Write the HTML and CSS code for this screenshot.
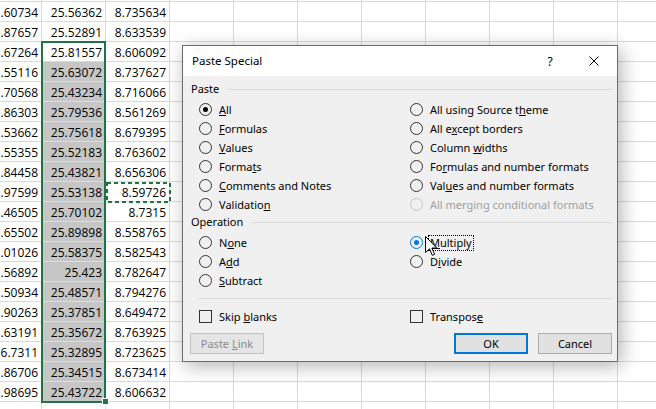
FILE: index.html
```html
<!DOCTYPE html>
<html>
<head>
<meta charset="utf-8">
<link rel="stylesheet" href="styles.css">
</head>
<body>
<div class="sheet">
  <div class="row"><div class="cell"></div><div class="cell"></div><div class="cell"></div><div class="cell"></div><div class="cell"></div><div class="cell"></div><div class="cell"></div><div class="cell"></div><div class="cell"></div><div class="cell"></div><div class="cell"></div></div>
  <div class="row"><div class="cell">.60734</div><div class="cell">25.56362</div><div class="cell">8.735634</div><div class="cell"></div><div class="cell"></div><div class="cell"></div><div class="cell"></div><div class="cell"></div><div class="cell"></div><div class="cell"></div><div class="cell"></div></div>
  <div class="row"><div class="cell">.87657</div><div class="cell">25.52891</div><div class="cell">8.633539</div><div class="cell"></div><div class="cell"></div><div class="cell"></div><div class="cell"></div><div class="cell"></div><div class="cell"></div><div class="cell"></div><div class="cell"></div></div>
  <div class="row"><div class="cell">.67264</div><div class="cell">25.81557</div><div class="cell">8.606092</div><div class="cell"></div><div class="cell"></div><div class="cell"></div><div class="cell"></div><div class="cell"></div><div class="cell"></div><div class="cell"></div><div class="cell"></div></div>
  <div class="row"><div class="cell">.55116</div><div class="cell sel">25.63072</div><div class="cell">8.737627</div><div class="cell"></div><div class="cell"></div><div class="cell"></div><div class="cell"></div><div class="cell"></div><div class="cell"></div><div class="cell"></div><div class="cell"></div></div>
  <div class="row"><div class="cell">.70568</div><div class="cell sel">25.43234</div><div class="cell">8.716066</div><div class="cell"></div><div class="cell"></div><div class="cell"></div><div class="cell"></div><div class="cell"></div><div class="cell"></div><div class="cell"></div><div class="cell"></div></div>
  <div class="row"><div class="cell">.86303</div><div class="cell sel">25.79536</div><div class="cell">8.561269</div><div class="cell"></div><div class="cell"></div><div class="cell"></div><div class="cell"></div><div class="cell"></div><div class="cell"></div><div class="cell"></div><div class="cell"></div></div>
  <div class="row"><div class="cell">.53662</div><div class="cell sel">25.75618</div><div class="cell">8.679395</div><div class="cell"></div><div class="cell"></div><div class="cell"></div><div class="cell"></div><div class="cell"></div><div class="cell"></div><div class="cell"></div><div class="cell"></div></div>
  <div class="row"><div class="cell">.55355</div><div class="cell sel">25.52183</div><div class="cell">8.763602</div><div class="cell"></div><div class="cell"></div><div class="cell"></div><div class="cell"></div><div class="cell"></div><div class="cell"></div><div class="cell"></div><div class="cell"></div></div>
  <div class="row"><div class="cell">.84458</div><div class="cell sel">25.43821</div><div class="cell">8.656306</div><div class="cell"></div><div class="cell"></div><div class="cell"></div><div class="cell"></div><div class="cell"></div><div class="cell"></div><div class="cell"></div><div class="cell"></div></div>
  <div class="row"><div class="cell">.97599</div><div class="cell sel">25.53138</div><div class="cell">8.59726</div><div class="cell"></div><div class="cell"></div><div class="cell"></div><div class="cell"></div><div class="cell"></div><div class="cell"></div><div class="cell"></div><div class="cell"></div></div>
  <div class="row"><div class="cell">.46505</div><div class="cell sel">25.70102</div><div class="cell">8.7315</div><div class="cell"></div><div class="cell"></div><div class="cell"></div><div class="cell"></div><div class="cell"></div><div class="cell"></div><div class="cell"></div><div class="cell"></div></div>
  <div class="row"><div class="cell">.65502</div><div class="cell sel">25.89898</div><div class="cell">8.558765</div><div class="cell"></div><div class="cell"></div><div class="cell"></div><div class="cell"></div><div class="cell"></div><div class="cell"></div><div class="cell"></div><div class="cell"></div></div>
  <div class="row"><div class="cell">.01026</div><div class="cell sel">25.58375</div><div class="cell">8.582543</div><div class="cell"></div><div class="cell"></div><div class="cell"></div><div class="cell"></div><div class="cell"></div><div class="cell"></div><div class="cell"></div><div class="cell"></div></div>
  <div class="row"><div class="cell">.56892</div><div class="cell sel">25.423</div><div class="cell">8.782647</div><div class="cell"></div><div class="cell"></div><div class="cell"></div><div class="cell"></div><div class="cell"></div><div class="cell"></div><div class="cell"></div><div class="cell"></div></div>
  <div class="row"><div class="cell">.50934</div><div class="cell sel">25.48571</div><div class="cell">8.794276</div><div class="cell"></div><div class="cell"></div><div class="cell"></div><div class="cell"></div><div class="cell"></div><div class="cell"></div><div class="cell"></div><div class="cell"></div></div>
  <div class="row"><div class="cell">.90263</div><div class="cell sel">25.37851</div><div class="cell">8.649472</div><div class="cell"></div><div class="cell"></div><div class="cell"></div><div class="cell"></div><div class="cell"></div><div class="cell"></div><div class="cell"></div><div class="cell"></div></div>
  <div class="row"><div class="cell">.63191</div><div class="cell sel">25.35672</div><div class="cell">8.763925</div><div class="cell"></div><div class="cell"></div><div class="cell"></div><div class="cell"></div><div class="cell"></div><div class="cell"></div><div class="cell"></div><div class="cell"></div></div>
  <div class="row"><div class="cell">6.7311</div><div class="cell sel">25.32895</div><div class="cell">8.723625</div><div class="cell"></div><div class="cell"></div><div class="cell"></div><div class="cell"></div><div class="cell"></div><div class="cell"></div><div class="cell"></div><div class="cell"></div></div>
  <div class="row"><div class="cell">.86706</div><div class="cell sel">25.34515</div><div class="cell">8.673414</div><div class="cell"></div><div class="cell"></div><div class="cell"></div><div class="cell"></div><div class="cell"></div><div class="cell"></div><div class="cell"></div><div class="cell"></div></div>
  <div class="row"><div class="cell">.98695</div><div class="cell sel">25.43722</div><div class="cell">8.606632</div><div class="cell"></div><div class="cell"></div><div class="cell"></div><div class="cell"></div><div class="cell"></div><div class="cell"></div><div class="cell"></div><div class="cell"></div></div>
  <div class="row"><div class="cell"></div><div class="cell"></div><div class="cell"></div><div class="cell"></div><div class="cell"></div><div class="cell"></div><div class="cell"></div><div class="cell"></div><div class="cell"></div><div class="cell"></div><div class="cell"></div></div>
</div>

<div class="selection"></div>
<div class="fill-handle"></div>
<svg class="ants" width="65" height="21" viewBox="0 0 65 21"><rect x="1" y="1" width="63" height="19" fill="none" stroke="#217346" stroke-width="2" stroke-dasharray="4 3"/></svg>

<div class="dialog">
  <div class="titlebar">
    <span class="title">Paste Special</span>
    <span class="tbtn help">?</span>
    <span class="tbtn close"><svg width="10" height="10" viewBox="0 0 10 10"><path d="M0.5 0.5 L9.5 9.5 M9.5 0.5 L0.5 9.5" stroke="#000" stroke-width="1" fill="none"/></svg></span>
  </div>
  <div class="content">
    <div class="group-head">Paste</div>
    <div class="options paste">
      <div class="opt"><span class="radio on"></span><span><u>A</u>ll</span></div>
      <div class="opt"><span class="radio"></span><span><u>F</u>ormulas</span></div>
      <div class="opt"><span class="radio"></span><span><u>V</u>alues</span></div>
      <div class="opt"><span class="radio"></span><span>Forma<u>t</u>s</span></div>
      <div class="opt"><span class="radio"></span><span><u>C</u>omments and Notes</span></div>
      <div class="opt"><span class="radio"></span><span>Validatio<u>n</u></span></div>
      <div class="opt"><span class="radio"></span><span>All using Source t<u>h</u>eme</span></div>
      <div class="opt"><span class="radio"></span><span>All e<u>x</u>cept borders</span></div>
      <div class="opt"><span class="radio"></span><span>Column <u>w</u>idths</span></div>
      <div class="opt"><span class="radio"></span><span>Fo<u>r</u>mulas and number formats</span></div>
      <div class="opt"><span class="radio"></span><span>Val<u>u</u>es and number formats</span></div>
      <div class="opt disabled"><span class="radio"></span><span>All merging conditional formats</span></div>
    </div>
    <div class="group-head">Operation</div>
    <div class="options operation">
      <div class="opt"><span class="radio"></span><span>N<u>o</u>ne</span></div>
      <div class="opt"><span class="radio"></span><span>A<u>d</u>d</span></div>
      <div class="opt"><span class="radio"></span><span><u>S</u>ubtract</span></div>
      <div class="opt"><span class="radio on blue"></span><span class="focus"><u>M</u>ultiply</span></div>
      <div class="opt"><span class="radio"></span><span>D<u>i</u>vide</span></div>
    </div>
    <div class="sep"></div>
    <div class="checks">
      <div class="opt"><span class="check"></span><span>Skip <u>b</u>lanks</span></div>
      <div class="opt"><span class="check"></span><span>Transpos<u>e</u></span></div>
    </div>
    <div class="buttons">
      <span class="btn disabled"><span>Paste <u>L</u>ink</span></span>
      <span class="spacer"></span>
      <span class="btn default">OK</span>
      <span class="btn">Cancel</span>
    </div>
  </div>
</div>

<svg class="cursor" width="13" height="21" viewBox="0 0 13 21"><path d="M0.5 0.5 L0.5 16.5 L4.5 12.8 L7.3 19.3 L9.6 18.3 L6.9 12 L11.8 12 Z" fill="#fff" stroke="#000" stroke-width="1" stroke-linejoin="miter"/></svg>
</body>
</html>
```

FILE: styles.css
```css
* { box-sizing: border-box; }
html, body { margin: 0; padding: 0; }
body {
  width: 656px;
  height: 409px;
  overflow: hidden;
  position: relative;
  background: #fff;
  font-family: "Open Sans", "Liberation Sans", sans-serif;
}

.sheet {
  margin: -18px 0 0 -22px;
  display: flex;
  flex-direction: column;
}
.row { display: flex; }
.cell {
  flex: 0 0 64px;
  width: 64px;
  height: 20px;
  border-right: 1px solid #dadada;
  border-bottom: 1px solid #dadada;
  padding: 3px 3px 0 0;
  font-size: 12px;
  line-height: 16px;
  text-align: right;
  white-space: nowrap;
  color: #000;
}
.cell.sel {
  background: #c6c6c6;
  border-bottom-color: #dedede;
  border-right-color: #c6c6c6;
}

.selection {
  position: absolute;
  left: 41px;
  top: 41px;
  width: 65px;
  height: 362px;
  border: 2px solid #217346;
}
.fill-handle {
  position: absolute;
  left: 102px;
  top: 398px;
  width: 7px;
  height: 7px;
  background: #217346;
  border: 1px solid #fff;
}
.ants {
  position: absolute;
  left: 106px;
  top: 182px;
}

.dialog {
  position: absolute;
  left: 182px;
  top: 45px;
  width: 436px;
  height: 317px;
  border: 1px solid #6b6b6b;
  background: #f0f0f0;
  box-shadow: 3px 4px 18px rgba(0, 0, 0, 0.3);
  display: flex;
  flex-direction: column;
  font-family: "Noto Sans", "Open Sans", sans-serif;
  font-size: 11px;
  color: #000;
}
.titlebar {
  height: 30px;
  flex: none;
  background: #fff;
  display: flex;
  align-items: center;
  padding-left: 9px;
}
.title { flex: 1; font-size: 11.5px; margin-top: -1px; }
.tbtn {
  width: 46px;
  height: 30px;
  display: flex;
  align-items: center;
  justify-content: center;
}
.help { font-size: 12px; padding-left: 4px; }

.content {
  flex: 1;
  display: flex;
  flex-direction: column;
  padding: 5px 5px 7px 7px;
}
.group-head {
  display: flex;
  align-items: center;
  height: 16px;
  line-height: 16px;
  margin-bottom: 3px;
  padding-left: 1px;
}
.group-head::after {
  content: "";
  flex: 1;
  height: 1px;
  background: #dadada;
  margin-left: 9px;
}
.options {
  display: grid;
  grid-template-columns: 211px 1fr;
  grid-auto-flow: column;
  padding-left: 9px;
}
.options.paste { grid-template-rows: repeat(6, 19px); }
.options.operation { grid-template-rows: repeat(3, 19px); }
.opt {
  display: flex;
  align-items: center;
  gap: 7px;
  height: 19px;
  white-space: nowrap;
}
.radio {
  flex: none;
  position: relative;
  width: 13px;
  height: 13px;
  border: 1px solid #333;
  border-radius: 50%;
}
.radio.on::after {
  content: "";
  position: absolute;
  left: 3px;
  top: 3px;
  width: 5px;
  height: 5px;
  border-radius: 50%;
  background: #000;
}
.radio.blue { border-color: #0078d7; }
.radio.blue::after { background: #0078d7; }
.opt.disabled { color: #a0a0a0; }
.opt.disabled .radio { border-color: #c4c4c4; }
.focus {
  outline: 1px dotted #000;
  padding: 0 1px;
  margin-left: -1px;
  line-height: 14px;
}

.sep {
  height: 1px;
  flex: none;
  background: #dadada;
  margin: 8px 0 0 8px;
}
.checks {
  display: grid;
  grid-template-columns: 211px 1fr;
  padding-left: 9px;
  margin-top: 8px;
}
.check {
  flex: none;
  width: 13px;
  height: 13px;
  border: 1px solid #333;
}
.buttons {
  display: flex;
  gap: 10px;
  margin-top: 7px;
}
.spacer { flex: 1; }
.btn {
  width: 74px;
  height: 21px;
  display: flex;
  align-items: center;
  justify-content: center;
  border: 1px solid #adadad;
  background: #e1e1e1;
  white-space: nowrap;
}
.btn.default { border: 2px solid #0078d7; }
.btn.disabled {
  color: #8a8a8a;
  border-color: #c3c3c3;
  background: #e5e5e5;
}

.cursor {
  position: absolute;
  left: 425px;
  top: 236px;
}
```
